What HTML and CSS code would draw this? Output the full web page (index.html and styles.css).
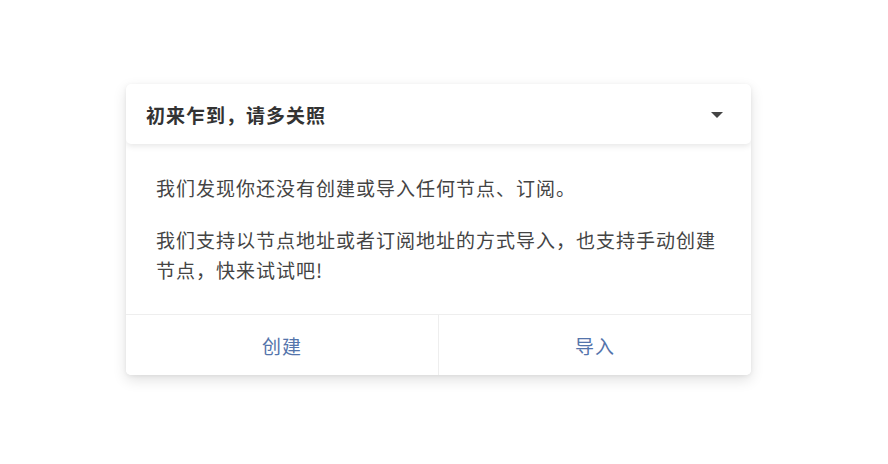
FILE: index.html
```html
<!DOCTYPE html>
<html lang="zh">
<head>
<meta charset="utf-8">
<link rel="stylesheet" href="styles.css">
</head>
<body>
<div class="page">
  <div class="card">
    <div class="header">
      <span class="title">初来乍到，请多关照</span>
      <svg class="caret" width="12" height="6" viewBox="0 0 12 6"><path d="M0 0H12L6 6Z" fill="#444"/></svg>
    </div>
    <div class="body">
      <p>我们发现你还没有创建或导入任何节点、订阅。</p>
      <p>我们支持以节点地址或者订阅地址的方式导入，也支持手动创建节点，快来试试吧!</p>
    </div>
    <div class="actions">
      <button class="btn">创建</button>
      <button class="btn">导入</button>
    </div>
  </div>
</div>
</body>
</html>
```
FILE: styles.css
```css
html, body {
  margin: 0;
  padding: 0;
  background: #fff;
}
body {
  font-family: "Noto Sans CJK SC", "Noto Sans", sans-serif;
}
.page {
  box-sizing: border-box;
  min-height: 464px;
  padding: 84px 0 60px 126px;
}
.card {
  width: 625px;
  background: #fff;
  border-radius: 5px;
  box-shadow: 0 5px 14px rgba(0, 0, 0, 0.12), 0 1px 4px rgba(0, 0, 0, 0.06);
  overflow: hidden;
}
.header {
  height: 60px;
  display: flex;
  align-items: center;
  justify-content: space-between;
  padding: 0 28px 0 20px;
  position: relative;
  z-index: 1;
  border-radius: 5px;
  box-shadow: 0 2px 6px rgba(0, 0, 0, 0.1);
}
.title {
  font-size: 19px;
  font-weight: 700;
  color: #333;
  letter-spacing: 1px;
}
.caret {
  display: block;
  margin-top: 1px;
}
.body {
  padding: 29px 30px 29px;
  border-bottom: 1px solid #eee;
}
.body p {
  margin: 0;
  font-size: 19px;
  line-height: 30px;
  color: #444;
  letter-spacing: 1px;
}
.body p + p {
  margin-top: 22px;
}
.actions {
  display: flex;
}
.btn {
  flex: 1;
  height: 60px;
  border: 0;
  background: #fff;
  font-family: inherit;
  font-size: 19px;
  letter-spacing: 1px;
  color: #5474ab;
  padding: 0;
}
.btn + .btn {
  border-left: 1px solid #eee;
}
```
